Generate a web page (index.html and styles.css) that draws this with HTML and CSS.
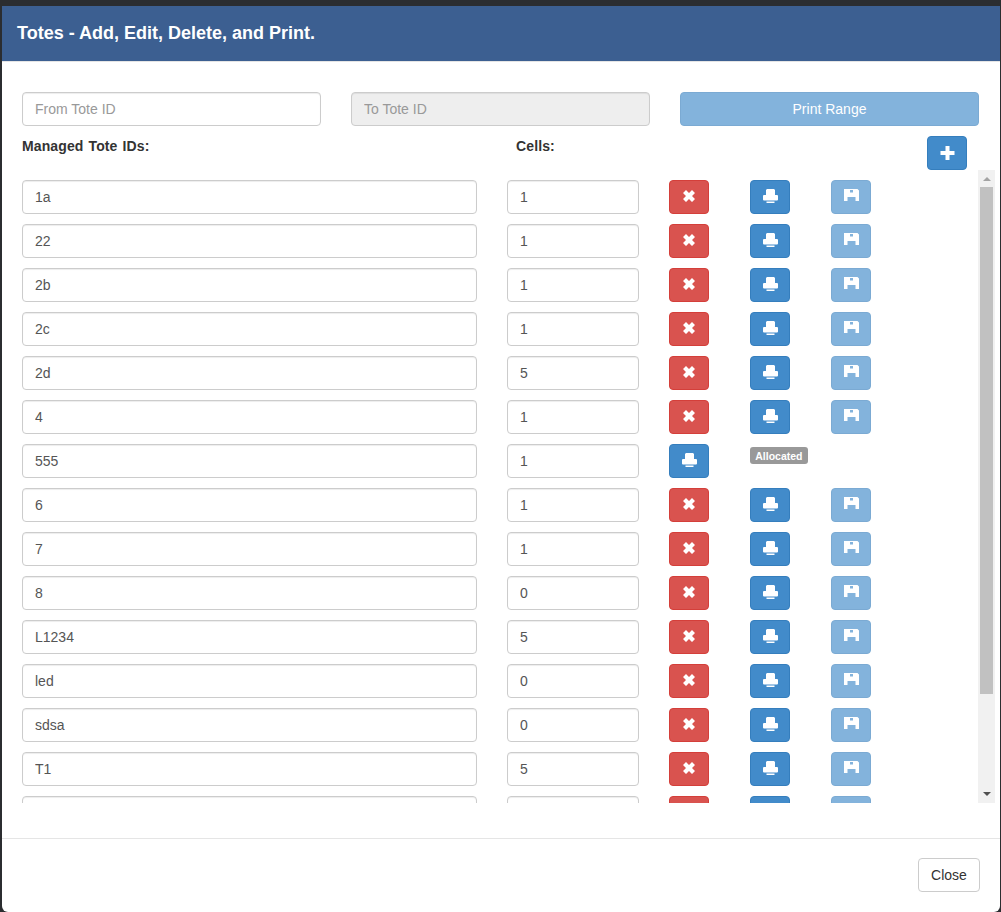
FILE: index.html
```html
<!DOCTYPE html>
<html>

<head>
    <meta charset="UTF-8">
    <title>Totes</title>
    <link rel="stylesheet" href="styles.css">
</head>

<body>
    <svg class="icon-defs" width="0" height="0">
        <symbol id="i-remove" viewBox="0 0 12 12">
            <path d="M3 0 6 3 9 0 12 3 9 6 12 9 9 12 6 9 3 12 0 9 3 6 0 3Z" />
        </symbol>
        <symbol id="i-print" viewBox="0 0 15 14">
            <path d="M4 0H11L12 1V6H14Q15 6 15 7V10.500Q15 11.500 14 11.500H1Q0 11.500 0 10.500V7Q0 6 1 6H3V1ZM3.500 12.500H11.500V14H3.500Z" />
        </symbol>
        <symbol id="i-save" viewBox="0 0 15 14">
            <path fill-rule="evenodd" d="M0 0H13.500L15 1.500V12H11.500V8H3.500V12H0ZM6 1H9V3.500H6Z" />
        </symbol>
        <symbol id="i-plus" viewBox="0 0 14 14">
            <path d="M5 0H9V5H14V9H9V14H5V9H0V5H5Z" />
        </symbol>
    </svg>

    <div class="modal">
        <div class="modal-header">Totes - Add, Edit, Delete, and Print.</div>

        <div class="modal-body">
            <div class="range-row">
                <input class="form-control" type="text" placeholder="From Tote ID">
                <input class="form-control" type="text" placeholder="To Tote ID" disabled>
                <button class="btn btn-primary faded" type="button">Print Range</button>
            </div>

            <div class="label-row">
                <label class="label-id">Managed Tote IDs:</label>
                <label class="label-cells">Cells:</label>
                <button class="btn btn-primary btn-icon btn-add" type="button"><svg class="icon plus"><use href="#i-plus" /></svg></button>
            </div>

            <div class="tote-box">
                <div class="tote-list">
                    <div class="tote-row">
                        <input class="form-control id" value="1a"><input class="form-control cells" value="1">
                        <button class="btn btn-danger btn-icon" type="button"><svg class="icon small"><use href="#i-remove" /></svg></button>
                        <button class="btn btn-primary btn-icon" type="button"><svg class="icon"><use href="#i-print" /></svg></button>
                        <button class="btn btn-primary btn-icon faded" type="button"><svg class="icon"><use href="#i-save" /></svg></button>
                    </div>
                    <div class="tote-row">
                        <input class="form-control id" value="22"><input class="form-control cells" value="1">
                        <button class="btn btn-danger btn-icon" type="button"><svg class="icon small"><use href="#i-remove" /></svg></button>
                        <button class="btn btn-primary btn-icon" type="button"><svg class="icon"><use href="#i-print" /></svg></button>
                        <button class="btn btn-primary btn-icon faded" type="button"><svg class="icon"><use href="#i-save" /></svg></button>
                    </div>
                    <div class="tote-row">
                        <input class="form-control id" value="2b"><input class="form-control cells" value="1">
                        <button class="btn btn-danger btn-icon" type="button"><svg class="icon small"><use href="#i-remove" /></svg></button>
                        <button class="btn btn-primary btn-icon" type="button"><svg class="icon"><use href="#i-print" /></svg></button>
                        <button class="btn btn-primary btn-icon faded" type="button"><svg class="icon"><use href="#i-save" /></svg></button>
                    </div>
                    <div class="tote-row">
                        <input class="form-control id" value="2c"><input class="form-control cells" value="1">
                        <button class="btn btn-danger btn-icon" type="button"><svg class="icon small"><use href="#i-remove" /></svg></button>
                        <button class="btn btn-primary btn-icon" type="button"><svg class="icon"><use href="#i-print" /></svg></button>
                        <button class="btn btn-primary btn-icon faded" type="button"><svg class="icon"><use href="#i-save" /></svg></button>
                    </div>
                    <div class="tote-row">
                        <input class="form-control id" value="2d"><input class="form-control cells" value="5">
                        <button class="btn btn-danger btn-icon" type="button"><svg class="icon small"><use href="#i-remove" /></svg></button>
                        <button class="btn btn-primary btn-icon" type="button"><svg class="icon"><use href="#i-print" /></svg></button>
                        <button class="btn btn-primary btn-icon faded" type="button"><svg class="icon"><use href="#i-save" /></svg></button>
                    </div>
                    <div class="tote-row">
                        <input class="form-control id" value="4"><input class="form-control cells" value="1">
                        <button class="btn btn-danger btn-icon" type="button"><svg class="icon small"><use href="#i-remove" /></svg></button>
                        <button class="btn btn-primary btn-icon" type="button"><svg class="icon"><use href="#i-print" /></svg></button>
                        <button class="btn btn-primary btn-icon faded" type="button"><svg class="icon"><use href="#i-save" /></svg></button>
                    </div>
                    <div class="tote-row">
                        <input class="form-control id" value="555"><input class="form-control cells" value="1">
                        <button class="btn btn-primary btn-icon" type="button"><svg class="icon"><use href="#i-print" /></svg></button>
                        <span class="badge">Allocated</span>
                    </div>
                    <div class="tote-row">
                        <input class="form-control id" value="6"><input class="form-control cells" value="1">
                        <button class="btn btn-danger btn-icon" type="button"><svg class="icon small"><use href="#i-remove" /></svg></button>
                        <button class="btn btn-primary btn-icon" type="button"><svg class="icon"><use href="#i-print" /></svg></button>
                        <button class="btn btn-primary btn-icon faded" type="button"><svg class="icon"><use href="#i-save" /></svg></button>
                    </div>
                    <div class="tote-row">
                        <input class="form-control id" value="7"><input class="form-control cells" value="1">
                        <button class="btn btn-danger btn-icon" type="button"><svg class="icon small"><use href="#i-remove" /></svg></button>
                        <button class="btn btn-primary btn-icon" type="button"><svg class="icon"><use href="#i-print" /></svg></button>
                        <button class="btn btn-primary btn-icon faded" type="button"><svg class="icon"><use href="#i-save" /></svg></button>
                    </div>
                    <div class="tote-row">
                        <input class="form-control id" value="8"><input class="form-control cells" value="0">
                        <button class="btn btn-danger btn-icon" type="button"><svg class="icon small"><use href="#i-remove" /></svg></button>
                        <button class="btn btn-primary btn-icon" type="button"><svg class="icon"><use href="#i-print" /></svg></button>
                        <button class="btn btn-primary btn-icon faded" type="button"><svg class="icon"><use href="#i-save" /></svg></button>
                    </div>
                    <div class="tote-row">
                        <input class="form-control id" value="L1234"><input class="form-control cells" value="5">
                        <button class="btn btn-danger btn-icon" type="button"><svg class="icon small"><use href="#i-remove" /></svg></button>
                        <button class="btn btn-primary btn-icon" type="button"><svg class="icon"><use href="#i-print" /></svg></button>
                        <button class="btn btn-primary btn-icon faded" type="button"><svg class="icon"><use href="#i-save" /></svg></button>
                    </div>
                    <div class="tote-row">
                        <input class="form-control id" value="led"><input class="form-control cells" value="0">
                        <button class="btn btn-danger btn-icon" type="button"><svg class="icon small"><use href="#i-remove" /></svg></button>
                        <button class="btn btn-primary btn-icon" type="button"><svg class="icon"><use href="#i-print" /></svg></button>
                        <button class="btn btn-primary btn-icon faded" type="button"><svg class="icon"><use href="#i-save" /></svg></button>
                    </div>
                    <div class="tote-row">
                        <input class="form-control id" value="sdsa"><input class="form-control cells" value="0">
                        <button class="btn btn-danger btn-icon" type="button"><svg class="icon small"><use href="#i-remove" /></svg></button>
                        <button class="btn btn-primary btn-icon" type="button"><svg class="icon"><use href="#i-print" /></svg></button>
                        <button class="btn btn-primary btn-icon faded" type="button"><svg class="icon"><use href="#i-save" /></svg></button>
                    </div>
                    <div class="tote-row">
                        <input class="form-control id" value="T1"><input class="form-control cells" value="5">
                        <button class="btn btn-danger btn-icon" type="button"><svg class="icon small"><use href="#i-remove" /></svg></button>
                        <button class="btn btn-primary btn-icon" type="button"><svg class="icon"><use href="#i-print" /></svg></button>
                        <button class="btn btn-primary btn-icon faded" type="button"><svg class="icon"><use href="#i-save" /></svg></button>
                    </div>
                    <div class="tote-row">
                        <input class="form-control id" value=""><input class="form-control cells" value="">
                        <button class="btn btn-danger btn-icon" type="button"></button>
                        <button class="btn btn-primary btn-icon" type="button"></button>
                        <button class="btn btn-primary btn-icon faded" type="button"></button>
                    </div>
                </div>

                <div class="scrollbar">
                    <span class="arrow up"></span>
                    <div class="thumb"></div>
                    <span class="arrow down"></span>
                </div>
            </div>
        </div>

        <div class="modal-footer">
            <button class="btn btn-default" type="button">Close</button>
        </div>
    </div>
</body>

</html>
```

FILE: styles.css
```css
html, body {
    height: 100%;
}

body {
    margin: 0;
    padding: 6px 0 0 2px;
    box-sizing: border-box;
    overflow: hidden;
    background-color: #2b2d30;
    font-family: "Liberation Sans", Arial, sans-serif;
    font-size: 14px;
    color: #333;
}

.icon-defs {
    display: block;
}

.modal {
    width: 998px;
    height: 906px;
    display: flex;
    flex-direction: column;
    background-color: #fff;
    border-radius: 0 0 6px 6px;
}

.modal-header {
    height: 56px;
    padding: 0 15px;
    display: flex;
    align-items: center;
    background-color: #3c5f91;
    border-bottom: 1px solid #e5e5e5;
    box-sizing: border-box;
    color: #fff;
    font-size: 18px;
    font-weight: bold;
}

.modal-body {
    flex: 1;
    padding: 30px 0 0 20px;
}

.modal-footer {
    height: 74px;
    box-sizing: border-box;
    padding: 19px 20px 0 0;
    display: flex;
    justify-content: flex-end;
    border-top: 1px solid #e5e5e5;
}

.range-row {
    display: flex;
    gap: 30px;
    width: 957px;
}

.range-row > * {
    width: 299px;
}

.label-row {
    height: 44px;
    display: flex;
    align-items: flex-start;
}

.label-row label {
    margin-top: 12px;
    font-weight: bold;
    word-spacing: 1px;
    letter-spacing: .12px;
}

.label-id {
    width: 494px;
}

.label-cells {
    width: 411px;
}

.btn-add {
    margin-top: 10px;
}

.form-control {
    height: 34px;
    padding: 6px 12px;
    box-sizing: border-box;
    border: 1px solid #ccc;
    border-radius: 4px;
    box-shadow: inset 0 1px 1px rgba(0, 0, 0, .075);
    background-color: #fff;
    color: #555;
    font-family: inherit;
    font-size: 14px;
}

.form-control::placeholder {
    color: #999;
}

.form-control:disabled {
    background-color: #eee;
}

.btn {
    height: 34px;
    padding: 6px 12px;
    box-sizing: border-box;
    border: 1px solid transparent;
    border-radius: 4px;
    font-family: inherit;
    font-size: 14px;
    color: #fff;
}

.btn-primary {
    background-color: #428bca;
    border-color: #357ebd;
}

.btn-danger {
    background-color: #d9534f;
    border-color: #d43f3a;
}

.btn-default {
    width: 62px;
    padding: 6px 0;
    background-color: #fff;
    border-color: #ccc;
    color: #333;
}

.btn-icon {
    width: 40px;
    padding: 0;
    display: flex;
    align-items: center;
    justify-content: center;
}

.faded {
    opacity: .65;
}

.icon {
    width: 15px;
    height: 14px;
    margin-bottom: 2px;
    fill: #fff;
}

.icon.small {
    width: 12px;
    height: 12px;
}

.icon.plus {
    margin-bottom: 0;
}

.tote-box {
    height: 633px;
    display: flex;
}

.tote-list {
    width: 956px;
    height: 633px;
    padding-top: 10px;
    box-sizing: border-box;
    overflow: hidden;
}

.tote-row {
    height: 34px;
    margin-bottom: 10px;
    display: flex;
    align-items: flex-start;
}

.tote-row .id {
    width: 455px;
    margin-right: 30px;
}

.tote-row .cells {
    width: 132px;
    margin-right: 30px;
}

.tote-row .btn + .btn {
    margin-left: 41px;
}

.badge {
    margin: 3px 0 0 41px;
    height: 17px;
    padding: 0 5.25px;
    display: inline-flex;
    align-items: center;
    background-color: #999;
    border-radius: 3px;
    color: #fff;
    font-size: 10.5px;
    font-weight: bold;
}

.scrollbar {
    width: 17px;
    height: 633px;
    display: flex;
    flex-direction: column;
    align-items: center;
    background-color: #f1f1f1;
}

.arrow {
    flex: none;
    width: 0;
    height: 0;
    margin: 7px 0 6px;
    border-left: 4px solid transparent;
    border-right: 4px solid transparent;
}

.arrow.up {
    border-bottom: 4px solid #a3a3a3;
}

.arrow.down {
    margin: auto 0 7px;
    border-top: 4px solid #505050;
}

.thumb {
    width: 13px;
    height: 507px;
    background-color: #c1c1c1;
}
```
